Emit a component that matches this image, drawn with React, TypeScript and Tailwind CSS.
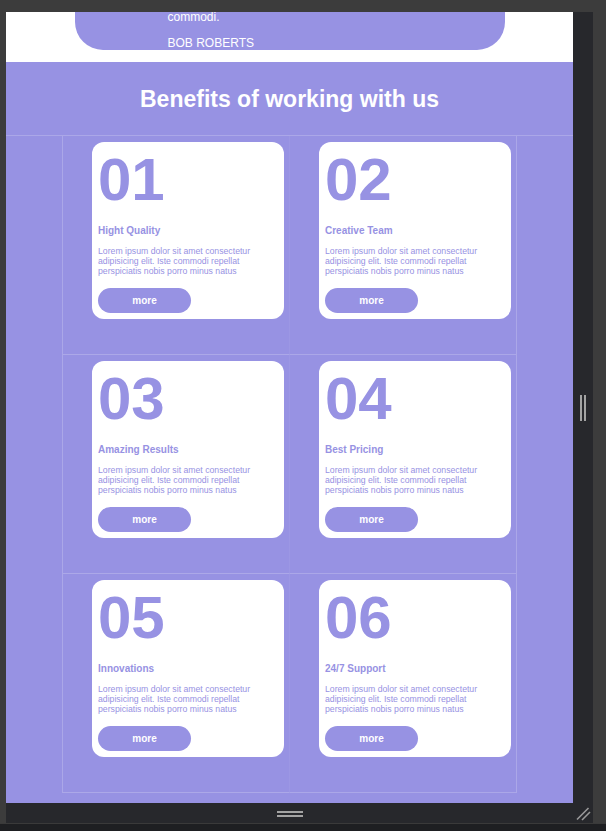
import React from "react";

interface Beneficio {
  num: string;
  titulo: string;
}

const beneficios: Beneficio[] = [
  { num: "01", titulo: "Hight Quality" },
  { num: "02", titulo: "Creative Team" },
  { num: "03", titulo: "Amazing Results" },
  { num: "04", titulo: "Best Pricing" },
  { num: "05", titulo: "Innovations" },
  { num: "06", titulo: "24/7 Support" },
];

function Card({ item }: { item: Beneficio }) {
  return (
    <div className="ml-[29px] mt-[6px] w-[192px] h-[177px] bg-white rounded-[12px] px-[6px] pt-[8px] text-[#9792e3]">
      <h3 className="text-[60px] leading-none font-bold">{item.num}</h3>
      <h4 className="mt-[15px] text-[10px] leading-[12px] font-bold">{item.titulo}</h4>
      <p className="mt-[9px] text-[8.7px] leading-[10px]">
        Lorem ipsum dolor sit amet consectetur adipisicing elit. Iste commodi repellat perspiciatis nobis porro minus natus
      </p>
      <button className="mt-[12px] w-[93px] h-[25px] rounded-full bg-[#9792e3] text-white text-[10px] font-bold">
        more
      </button>
    </div>
  );
}

export default function App() {
  return (
    <div className="w-[606px] h-[831px] bg-[#3c3c3c] flex flex-col overflow-hidden font-['Liberation_Sans',Arial,sans-serif]">
      <div className="h-[12px] shrink-0" />
      <div className="ml-[6px] w-[587px] h-[811px] shrink-0 bg-[#27282c] grid grid-cols-[567px_20px] grid-rows-[791px_20px]">
        <main className="bg-white overflow-hidden flex flex-col">
          {/* fim do depoimento */}
          <div className="h-[50px] shrink-0 bg-white">
            <div className="mx-auto w-[430px] h-[38px] bg-[#9792e3] rounded-b-[28px] overflow-hidden pl-[93px] text-white text-[12px]">
              <p className="leading-[11px]">commodi.</p>
              <p className="mt-[12.5px] leading-[14px]">BOB ROBERTS</p>
            </div>
          </div>

          <section className="flex-1 bg-[#9792e3]">
            <div className="h-[74px] pt-[23px] border-b border-white/20">
              <h2 className="text-center text-white text-[23px] leading-[28px] font-bold">Benefits of working with us</h2>
            </div>
            <div className="mx-auto w-[455px] border-x border-white/20 grid grid-cols-[227px_226px]">
              {beneficios.map((item, index) => (
                <div
                  key={index}
                  className={
                    index % 2 === 0
                      ? "h-[219px] border-b border-r border-b-white/20 border-r-white/5"
                      : "h-[219px] border-b border-white/20"
                  }
                >
                  <Card item={item} />
                </div>
              ))}
            </div>
          </section>
        </main>

        {/* alça lateral */}
        <div className="flex items-center justify-center gap-[2px]">
          <span className="w-[2px] h-[26px] bg-[#a3a3a3]" />
          <span className="w-[2px] h-[26px] bg-[#a3a3a3]" />
        </div>

        {/* alça de baixo */}
        <div className="flex flex-col items-center justify-center gap-[2px] pt-[1px]">
          <span className="w-[26px] h-[2px] bg-[#a3a3a3]" />
          <span className="w-[26px] h-[2px] bg-[#a3a3a3]" />
        </div>

        <div className="flex items-center justify-center">
          <svg width="20" height="20" viewBox="0 0 20 20">
            <path d="M4 16.5 L15.5 5" stroke="#9a9a9a" strokeWidth="1.6" />
            <path d="M9 17 L17 9" stroke="#9a9a9a" strokeWidth="1.6" />
          </svg>
        </div>
      </div>
      <div className="flex-1 bg-[#1e1f22] border-t border-[#3a3a3a]" />
    </div>
  );
}
